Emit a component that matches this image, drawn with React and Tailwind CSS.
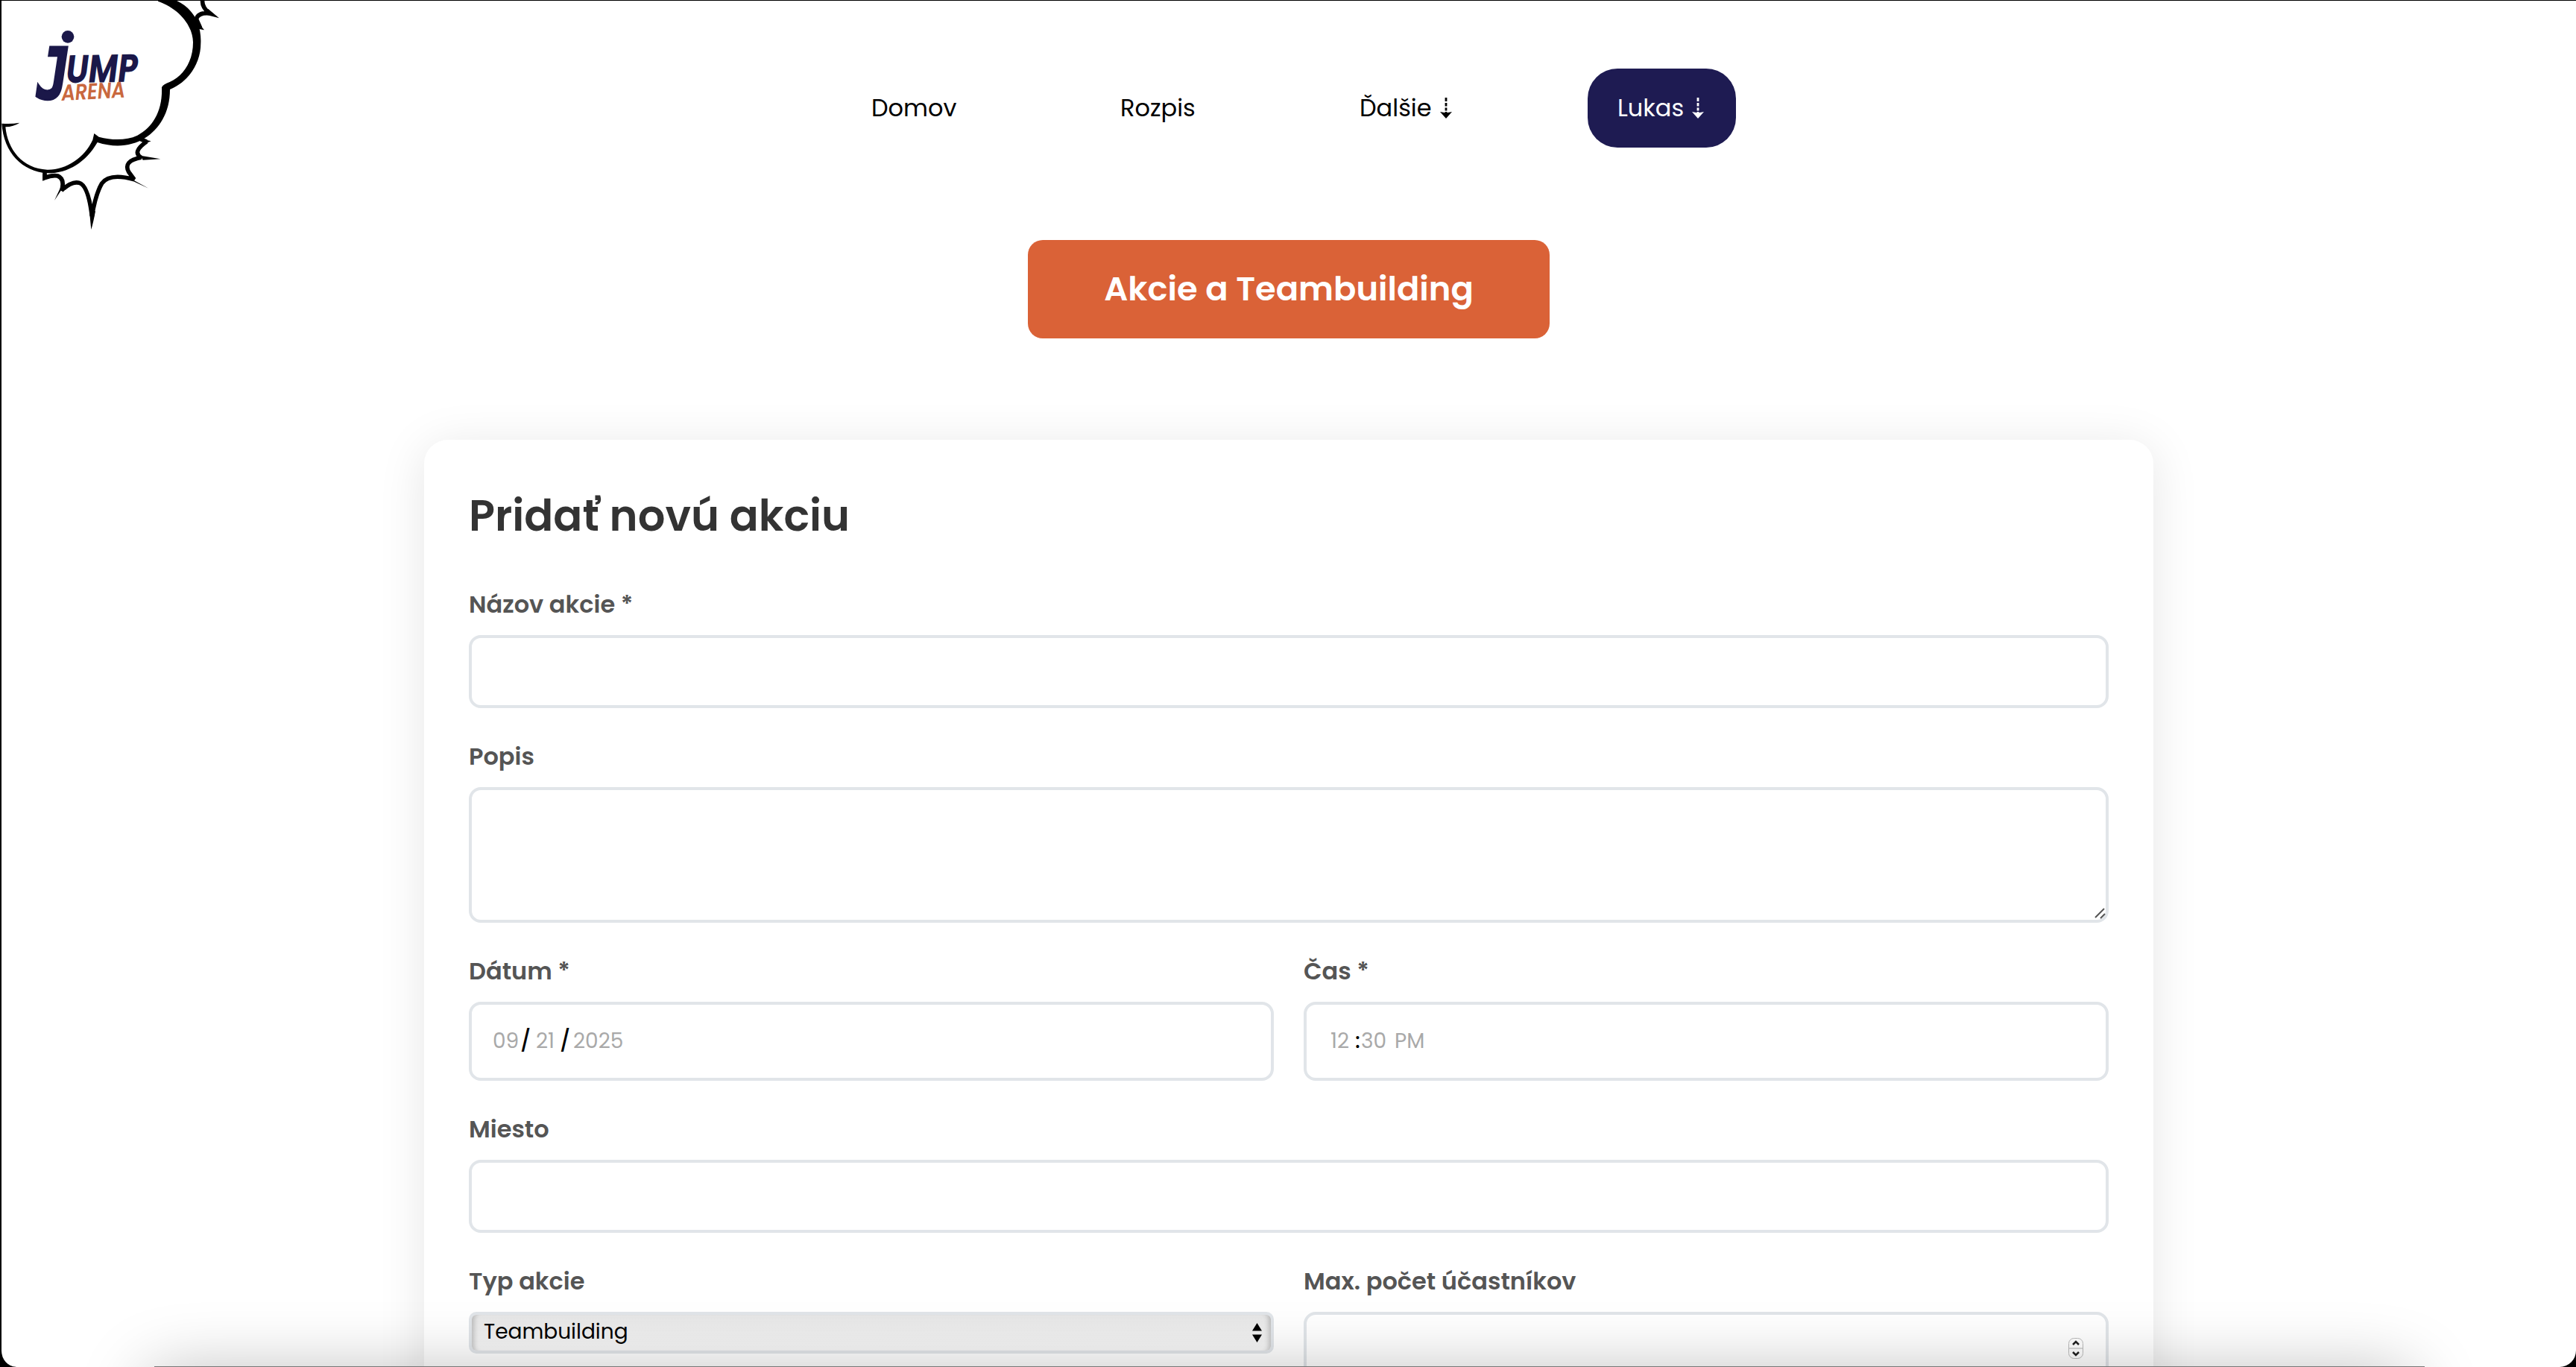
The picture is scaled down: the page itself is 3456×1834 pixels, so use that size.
import React from 'react';

function DashedArrow() {
  return (
    <svg className="ml-[11px] h-[28px] w-[16px]" viewBox="0 0 16 28" fill="currentColor">
      <path d="M6.6 0h2.8v5H6.6zM6.6 7h2.8v4.500H6.6zM6.600 13.500h2.800v4H6.600zM6.600 19h2.800v2H6.600zM0 19L8 20.500l8-1.500L8 28z" />
    </svg>
  );
}

function Logo() {
  return (
    <svg className="absolute -left-[2px] -top-px h-[320px] w-[320px]" viewBox="0 0 960 960" fill="none">
      {/* burst behind the cloud */}
      <g stroke="#000" strokeWidth="17" strokeLinejoin="miter" strokeMiterlimit="2">
        <path d="M815 0Q812 28 842 53Q798 50 790 76L806 112" />
        <path d="M566 560L590 570Q530 612 568 634Q494 648 518 692L540 722Q440 695 410 738Q385 780 370 870Q355 745 318 736Q290 728 248 766Q262 720 232 708Q210 704 180 716V692" />
      </g>
      <g fill="#000">
        <path d="M838 36L882 73L812 55zM786 76L822 121L798 116zM577 561L608 568L584 578zM565 626L646 640L575 644zM516 713L598 758L540 731zM360 850Q364 895 367 924Q376 895 384 850zM258 748L219 807L240 762zM172 700V727L198 716z" />
        <path d="M636 0H705C775 30 812 95 808 175C808 250 765 325 684 360C684 455 640 520 583 556C530 590 460 595 392 573C345 655 270 699 190 697C90 690 15 615 7 497Q45 500 79 494Q55 510 22 511C30 600 90 680 190 683C265 685 340 635 373 563L379 537L398 551C455 566 510 565 553 545C615 513 655 445 651 352Q655 340 683 330C740 305 777 245 777 170C775 100 720 35 636 5z" />
      </g>
      <circle cx="273" cy="148" r="25" fill="#1b1849" />
      <g fill="#1b1849" stroke="#1b1849" strokeWidth="8" className="font-['DejaVu_Sans_Mono',monospace] font-bold italic">
        <text transform="translate(148 400) scale(0.76 1)" fontSize="290">J</text>
      </g>
      <g fill="#1b1849" className="font-[Poppins,Inter,sans-serif] font-bold italic">
        <text transform="translate(266 334) rotate(-1)" fontSize="158" textLength="290" lengthAdjust="spacingAndGlyphs">UMP</text>
      </g>
      <g fill="#c9683e" className="font-[Poppins,Inter,sans-serif] font-semibold italic">
        <text transform="translate(249 405) rotate(-3)" fontSize="90" textLength="256" lengthAdjust="spacingAndGlyphs">ARENA</text>
      </g>
    </svg>
  );
}

function Field({ label, children }) {
  return (
    <div className="flex flex-1 flex-col">
      <label className="mb-[17px] h-[49px] whitespace-nowrap text-[32px] font-semibold leading-[49px] text-[#555]">
        {label}
      </label>
      {children}
    </div>
  );
}

function Box({ className, children }) {
  return (
    <div className={`flex rounded-[16px] border-4 border-[#e1e5e9] bg-white ${className}`}>
      {children}
    </div>
  );
}

export default function App() {
  return (
    <div className="relative h-[1834px] w-[3456px] overflow-hidden bg-black font-[Poppins,Inter,sans-serif]">
      <div className="relative h-[1834px] overflow-hidden rounded-b-[22px] border-l-2 border-t border-black bg-white">
        <nav className="flex h-[197px] items-end text-[32px] text-black">
          <div className="ml-[1167px] flex h-[106px] w-[334px] items-center">Domov</div>
          <div className="flex h-[106px] w-[321px] items-center">Rozpis</div>
          <div className="flex h-[106px] w-[306px] items-center">Ďalšie<DashedArrow /></div>
          <div className="flex h-[106px] w-[199px] items-center rounded-[40px] bg-[#1e1b52] pl-[40px] text-white">
            Lukas<DashedArrow />
          </div>
        </nav>

        <div className="ml-[1377px] mt-[124px] flex h-[132px] w-[700px] items-center justify-center rounded-[20px] bg-[#da6237] text-[44.8px] font-semibold text-white">
          Akcie a Teambuilding
        </div>

        <main className="ml-[567px] mt-[136px] flex h-[1500px] w-[2320px] flex-col gap-[40px] rounded-[32px] bg-white px-[60px] pt-[60px] shadow-[0_8px_64px_rgba(0,0,0,0.1)]">
          <h1 className="-mb-[4px] h-[100px] text-[57.6px] font-semibold leading-[84px] text-[#333]">Pridať novú akciu</h1>
          <div className="flex">
            <Field label="Názov akcie *"><Box className="h-[98px]" /></Field>
          </div>
          <div className="flex">
            <Field label="Popis">
              <Box className="h-[182px] items-end justify-end">
                <svg className="h-[18px] w-[18px]" viewBox="0 0 18 18" stroke="#555" strokeWidth="2">
                  <path d="M4 15L16 3M11 16L17 10" />
                </svg>
              </Box>
            </Field>
          </div>
          <div className="flex gap-[40px]">
            <Field label="Dátum *">
              <Box className="h-[106px] items-center pl-[28px] text-[28px] text-[#a9a9a9]">
                <span className="w-[37px]">09</span>
                <span className="w-[21px] font-medium text-black">/</span>
                <span className="w-[32px]">21</span>
                <span className="w-[18px] font-medium text-black">/</span>
                <span>2025</span>
              </Box>
            </Field>
            <Field label="Čas *">
              <Box className="h-[106px] items-center pl-[32px] text-[28px] text-[#a9a9a9]">
                <span className="w-[33px]">12</span>
                <span className="w-[8px] font-medium text-black">:</span>
                <span className="w-[45px]">30</span>
                <span>PM</span>
              </Box>
            </Field>
          </div>
          <div className="flex">
            <Field label="Miesto"><Box className="h-[98px]" /></Field>
          </div>
          <div className="flex gap-[40px]">
            <Field label="Typ akcie">
              <div className="flex h-[56px] items-center justify-between rounded-[10px] border-4 border-[#e1e5e9] bg-linear-to-b from-[#e6e6e6] to-[#f8f8f8] pl-[16px] pr-[12px] text-[28px] leading-[46px] text-black shadow-[inset_8px_0_6px_-5px_rgba(0,0,0,0.2),inset_-8px_0_6px_-5px_rgba(0,0,0,0.2)]">
                <span className="-mt-[2px]">Teambuilding</span>
                <svg className="h-[26px] w-[13px]" viewBox="0 0 13 26">
                  <path d="M6.5 0L13 10.500H0zM6.500 26L13 15.500H0z" />
                </svg>
              </div>
            </Field>
            <Field label="Max. počet účastníkov">
              <Box className="h-[98px] items-center justify-end pr-[30px]">
                <svg className="h-[28px] w-[20px]" viewBox="0 0 20 28" fill="none">
                  <rect x="0.5" y="0.500" width="19" height="27" rx="7" fill="#fff" stroke="#bbb" />
                  <path d="M1 14H19" stroke="#ccc" strokeWidth="1.500" />
                  <path d="M6 9L10 5L14 9M6 19L10 23L14 19" stroke="#222" strokeWidth="2.500" />
                </svg>
              </Box>
            </Field>
          </div>
        </main>

        <Logo />

        {/* shadow cast by the window underneath */}
        <div className="absolute left-[205px] top-[1850px] h-[100px] w-[3020px] rounded-[20px] shadow-[0_0_90px_10px_rgba(0,0,0,0.27)]" />
        <div className="absolute bottom-0 left-[205px] h-px w-[3046px] bg-[#777]" />
      </div>
    </div>
  );
}
